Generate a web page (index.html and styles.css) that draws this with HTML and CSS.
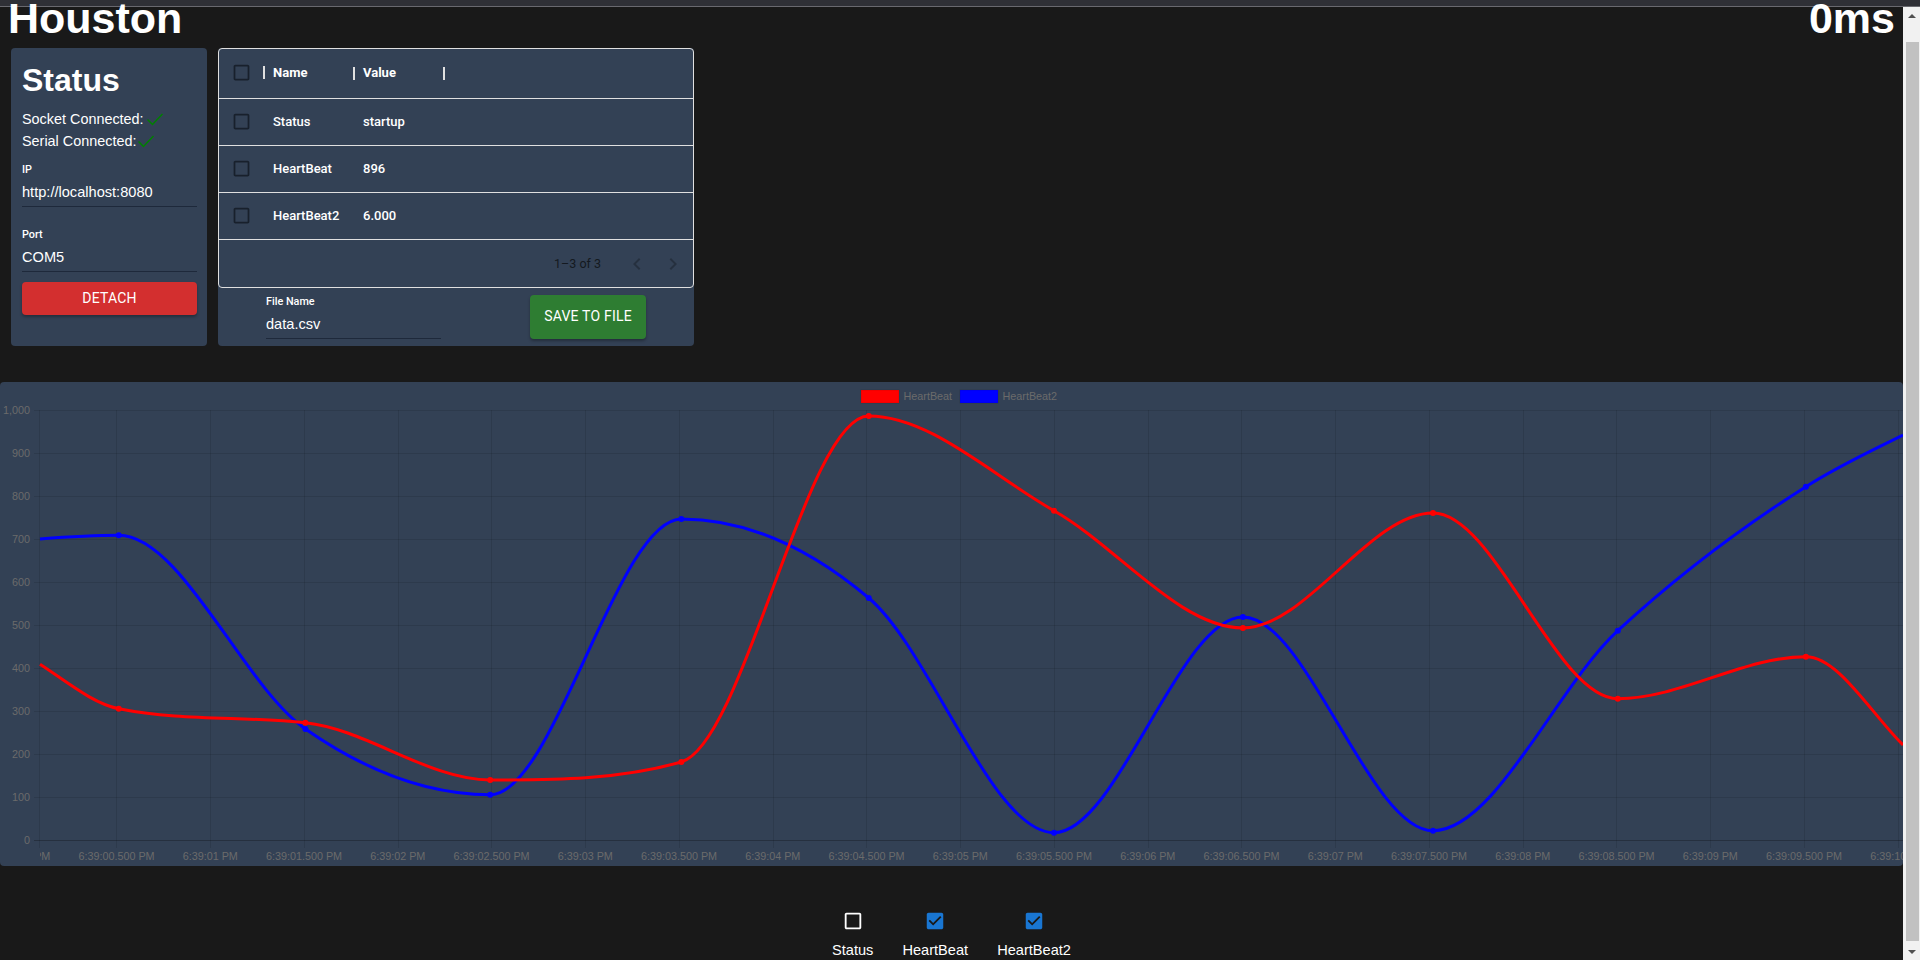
FILE: index.html
```html
<!DOCTYPE html>
<html>
<head>
	<meta charset="utf-8">
	<title>Houston</title>
	<link rel="stylesheet" href="styles.css">
</head>
<body>
	<div class="top-strip"></div>
	<div class="shell">
		<main class="page">
			<!--title row-->
			<header class="title-row">
				<h1>Houston</h1>
				<h1>0ms</h1>
			</header>

			<div class="panels">
				<!--status-->
				<section class="card status-card">
					<h2>Status</h2>
					<div class="status-lines">
						<div>Socket Connected:
							<svg class="tick" width="16" height="13" viewBox="0 0 16 13"><path d="M0.5 6.5 L5.5 11.5 L15.5 1"/></svg>
						</div>
						<div>Serial Connected:
							<svg class="tick" width="16" height="13" viewBox="0 0 16 13"><path d="M0.5 6.5 L5.5 11.5 L15.5 1"/></svg>
						</div>
					</div>
					<div class="field">
						<label>IP</label>
						<div class="field-value">http://localhost:8080</div>
					</div>
					<div class="field">
						<label>Port</label>
						<div class="field-value">COM5</div>
					</div>
					<button class="btn btn-red">DETACH</button>
				</section>

				<!--data table-->
				<section class="card table-card">
					<div class="grid">
						<div class="grid-row grid-head">
							<div class="cell-check"><svg class="box" viewBox="0 0 24 24"><path d="M19 5v14H5V5h14m0-2H5c-1.1 0-2 .9-2 2v14c0 1.1.9 2 2 2h14c1.1 0 2-.9 2-2V5c0-1.1-.9-2-2-2z"/></svg></div>
							<div class="cell">Name</div>
							<div class="cell">Value</div>
						</div>
						<div class="grid-row">
							<div class="cell-check"><svg class="box" viewBox="0 0 24 24"><path d="M19 5v14H5V5h14m0-2H5c-1.1 0-2 .9-2 2v14c0 1.1.9 2 2 2h14c1.1 0 2-.9 2-2V5c0-1.1-.9-2-2-2z"/></svg></div>
							<div class="cell">Status</div>
							<div class="cell">startup</div>
						</div>
						<div class="grid-row">
							<div class="cell-check"><svg class="box" viewBox="0 0 24 24"><path d="M19 5v14H5V5h14m0-2H5c-1.1 0-2 .9-2 2v14c0 1.1.9 2 2 2h14c1.1 0 2-.9 2-2V5c0-1.1-.9-2-2-2z"/></svg></div>
							<div class="cell">HeartBeat</div>
							<div class="cell">896</div>
						</div>
						<div class="grid-row">
							<div class="cell-check"><svg class="box" viewBox="0 0 24 24"><path d="M19 5v14H5V5h14m0-2H5c-1.1 0-2 .9-2 2v14c0 1.1.9 2 2 2h14c1.1 0 2-.9 2-2V5c0-1.1-.9-2-2-2z"/></svg></div>
							<div class="cell">HeartBeat2</div>
							<div class="cell">6.000</div>
						</div>
						<div class="grid-foot">
							<span class="page-count">1–3 of 3</span>
							<svg class="chevron" viewBox="0 0 24 24"><path d="M15.41 7.41 14 6l-6 6 6 6 1.41-1.41L10.83 12z"/></svg>
							<svg class="chevron" viewBox="0 0 24 24"><path d="M10 6 8.59 7.41 13.17 12l-4.58 4.58L10 18l6-6z"/></svg>
						</div>
					</div>
					<div class="save-row">
						<div class="field file-field">
							<label>File Name</label>
							<div class="field-value">data.csv</div>
						</div>
						<button class="btn btn-green">SAVE TO FILE</button>
					</div>
				</section>
			</div>

			<!--chart-->
			<section class="chart-card">
				<svg class="chart" width="1903" height="484" viewBox="0 382 1903 484">
					<defs>
						<clipPath id="xlabels"><rect x="40" y="845" width="1863" height="21"/></clipPath>
					</defs>

					<!--legend-->
					<rect class="legend-box" x="861" y="390" width="38" height="13" fill="#ff0000"/>
					<text class="label" x="903.5" y="400">HeartBeat</text>
					<rect class="legend-box" x="960" y="390" width="38" height="13" fill="#0000ff"/>
					<text class="label" x="1002.5" y="400">HeartBeat2</text>

					<!--grid-->
					<path class="grid-line" d="M34 410.5H1903 M34 453.5H1903 M34 496.5H1903 M34 539.5H1903 M34 582.5H1903 M34 625.5H1903 M34 668.5H1903 M34 711.5H1903 M34 754.5H1903 M34 797.5H1903"/>
					<path class="grid-line" d="M39.5 410V848 M116.5 410V848 M210.5 410V848 M304.5 410V848 M398.5 410V848 M491.5 410V848 M585.5 410V848 M679.5 410V848 M773.5 410V848 M866.5 410V848 M960.5 410V848 M1054.5 410V848 M1148.5 410V848 M1241.5 410V848 M1335.5 410V848 M1429.5 410V848 M1523.5 410V848 M1616.5 410V848 M1710.5 410V848 M1804.5 410V848 M1898.5 410V848"/>
					<path class="zero-line" d="M34 840.5H1903"/>

					<!--y axis-->
					<g class="y-labels">
						<text x="30" y="414">1,000</text>
						<text x="30" y="457">900</text>
						<text x="30" y="500">800</text>
						<text x="30" y="543">700</text>
						<text x="30" y="586">600</text>
						<text x="30" y="629">500</text>
						<text x="30" y="672">400</text>
						<text x="30" y="715">300</text>
						<text x="30" y="758">200</text>
						<text x="30" y="801">100</text>
						<text x="30" y="844">0</text>
					</g>

					<!--x axis-->
					<g class="x-labels" clip-path="url(#xlabels)">
						<text x="22.75" y="860">6:39:00 PM</text>
						<text x="116.5" y="860">6:39:00.500 PM</text>
						<text x="210.25" y="860">6:39:01 PM</text>
						<text x="304" y="860">6:39:01.500 PM</text>
						<text x="397.75" y="860">6:39:02 PM</text>
						<text x="491.5" y="860">6:39:02.500 PM</text>
						<text x="585.25" y="860">6:39:03 PM</text>
						<text x="679" y="860">6:39:03.500 PM</text>
						<text x="772.75" y="860">6:39:04 PM</text>
						<text x="866.5" y="860">6:39:04.500 PM</text>
						<text x="960.25" y="860">6:39:05 PM</text>
						<text x="1054" y="860">6:39:05.500 PM</text>
						<text x="1147.75" y="860">6:39:06 PM</text>
						<text x="1241.5" y="860">6:39:06.500 PM</text>
						<text x="1335.25" y="860">6:39:07 PM</text>
						<text x="1429" y="860">6:39:07.500 PM</text>
						<text x="1522.75" y="860">6:39:08 PM</text>
						<text x="1616.5" y="860">6:39:08.500 PM</text>
						<text x="1710.25" y="860">6:39:09 PM</text>
						<text x="1804" y="860">6:39:09.500 PM</text>
						<text x="1897.75" y="860">6:39:10 PM</text>
					</g>

					<!--HeartBeat2-->
					<path class="series series-blue" d="M40 539 C66 537 92 535.3 118.75 535.3 C180.97 535.3 243.2 685.6 305.4 729 C367 771.9 428.6 794.7 490.2 794.7 C553.9 794.7 617.6 519 681.3 519 C743.8 519 806.3 545.3 868.75 598 C930.5 650.1 992.25 832.7 1054 832.7 C1117 832.7 1179.9 617 1242.9 617 C1306.3 617 1369.6 830.7 1433 830.7 C1494.6 830.7 1556.2 687.6 1617.8 630.7 C1680.5 572.8 1743.2 526.4 1805.9 486.7 C1838 466 1871 451 1903 435"/>
					<g class="dots-blue">
						<circle cx="118.75" cy="535.3" r="3"/>
						<circle cx="305.4" cy="729" r="3"/>
						<circle cx="490.2" cy="794.7" r="3"/>
						<circle cx="681.3" cy="519" r="3"/>
						<circle cx="868.75" cy="598" r="3"/>
						<circle cx="1054" cy="832.7" r="3"/>
						<circle cx="1242.9" cy="617" r="3"/>
						<circle cx="1433" cy="830.7" r="3"/>
						<circle cx="1617.8" cy="630.7" r="3"/>
						<circle cx="1805.9" cy="486.7" r="3"/>
					</g>

					<!--HeartBeat-->
					<path class="series series-red" d="M40 664.3 C66 681 92.5 703.5 118.75 708.7 C180.95 721 243.2 716.2 305.4 722.7 C367 729.2 428.6 780 490.2 780 C553.9 780 617.6 780 681.3 762 C743.8 744.3 806.3 416 868.75 416 C930.5 416 992.25 475.7 1054 510.7 C1117 546.4 1179.9 628 1242.9 628 C1306.3 628 1369.6 513 1433 513 C1494.6 513 1556.2 698.7 1617.8 698.7 C1680.5 698.7 1743.2 656.7 1805.9 656.7 C1838 656.7 1870 712 1903 745"/>
					<g class="dots-red">
						<circle cx="118.75" cy="708.7" r="3"/>
						<circle cx="305.4" cy="722.7" r="3"/>
						<circle cx="490.2" cy="780" r="3"/>
						<circle cx="681.3" cy="762" r="3"/>
						<circle cx="868.75" cy="416" r="3"/>
						<circle cx="1054" cy="510.7" r="3"/>
						<circle cx="1242.9" cy="628" r="3"/>
						<circle cx="1433" cy="513" r="3"/>
						<circle cx="1617.8" cy="698.7" r="3"/>
						<circle cx="1805.9" cy="656.7" r="3"/>
					</g>
				</svg>
			</section>

			<!--series toggles-->
			<div class="toggles">
				<div class="toggle">
					<svg class="toggle-icon off" viewBox="0 0 24 24"><path d="M19 5v14H5V5h14m0-2H5c-1.1 0-2 .9-2 2v14c0 1.1.9 2 2 2h14c1.1 0 2-.9 2-2V5c0-1.1-.9-2-2-2z"/></svg>
					<span>Status</span>
				</div>
				<div class="toggle">
					<svg class="toggle-icon on" viewBox="0 0 24 24"><path d="M19 3H5c-1.11 0-2 .9-2 2v14c0 1.1.89 2 2 2h14c1.11 0 2-.9 2-2V5c0-1.1-.89-2-2-2zm-9 14l-5-5 1.41-1.41L10 14.17l7.59-7.59L19 8l-9 9z"/></svg>
					<span>HeartBeat</span>
				</div>
				<div class="toggle">
					<svg class="toggle-icon on" viewBox="0 0 24 24"><path d="M19 3H5c-1.11 0-2 .9-2 2v14c0 1.1.89 2 2 2h14c1.11 0 2-.9 2-2V5c0-1.1-.89-2-2-2zm-9 14l-5-5 1.41-1.41L10 14.17l7.59-7.59L19 8l-9 9z"/></svg>
					<span>HeartBeat2</span>
				</div>
			</div>
		</main>

		<!--scrollbar-->
		<div class="scrollbar">
			<div class="arrow-up"></div>
			<div class="thumb"></div>
			<div class="arrow-down"></div>
		</div>
	</div>
</body>
</html>
```

FILE: styles.css
```css
*{
    margin: 0;
    padding: 0;
    box-sizing: border-box;
}

html, body{
    width: 100%;
    height: 100%;
    overflow: hidden;
}

body{
    background-color: #191919;
    color: #fff;
    font-family: "Liberation Sans", Arial, sans-serif;
}

.top-strip{
    height: 7px;
    background-color: #2f3036;
    border-bottom: 1px solid #69696f;
}

.shell{
    display: flex;
    height: 953px;
}

.page{
    width: 1903px;
    flex-shrink: 0;
}

/* title */
.title-row{
    display: flex;
    justify-content: space-between;
    padding: 0 8px;
    margin-bottom: 18px;
}

.title-row h1{
    font-size: 43px;
    line-height: 23px;
    font-weight: 700;
}

/* top panels */
.panels{
    display: flex;
    gap: 11px;
    padding-left: 11px;
    margin-bottom: 36px;
}

.card{
    height: 298px;
    background-color: #334155;
    border-radius: 4px;
}

.status-card{
    width: 196px;
    padding: 14px 10px 0 11px;
}

.status-card h2{
    font-size: 32px;
    line-height: 36px;
    font-weight: 700;
    margin-bottom: 10px;
}

.status-lines{
    font-size: 14.4px;
    line-height: 22px;
    margin-bottom: 11px;
}

.tick{
    margin-left: -1px;
    vertical-align: -2px;
    fill: none;
    stroke: #008000;
    stroke-width: 1.5;
}

.status-lines div + div .tick{
    margin-left: -2px;
}

.field label{
    display: block;
    font-family: Roboto, sans-serif;
    font-size: 10.8px;
    font-weight: 500;
    line-height: 13px;
    margin-bottom: 5px;
}

.field-value{
    font-size: 14.6px;
    line-height: 22px;
    padding-bottom: 3px;
    border-bottom: 1px solid #1e293b;
}

.field + .field{
    margin-top: 21px;
}

.btn{
    display: block;
    border: 0;
    border-radius: 4px;
    padding-bottom: 2px;
    color: #fff;
    font-family: Roboto, sans-serif;
    font-size: 14px;
    letter-spacing: 0.2px;
    box-shadow: 0 2px 3px rgba(0, 0, 0, 0.3);
}

.btn-red{
    width: 175px;
    height: 33px;
    margin-top: 10px;
    background-color: #d32f2f;
}

.btn-green{
    width: 116px;
    height: 44px;
    margin-left: 89px;
    background-color: #2e7d32;
}

/* table */
.table-card{
    width: 476px;
}

.grid{
    border: 1px solid #e0e0e0;
    border-radius: 4px;
    height: 240px;
    font-family: Roboto, sans-serif;
    font-size: 13px;
    font-weight: 500;
}

.grid-row{
    display: flex;
    align-items: center;
    height: 47px;
    padding-bottom: 2px;
    border-bottom: 1px solid #e0e0e0;
}

.grid-head{
    height: 50px;
    font-weight: 700;
}

.cell-check{
    display: flex;
    align-items: center;
    width: 54px;
    padding-left: 12px;
}

.box{
    width: 21px;
    height: 21px;
    fill: #18202c;
}

.cell{
    width: 90px;
}

/* the little separators in the header */
.grid-head .cell-check, .grid-head .cell{
    position: relative;
}

.grid-head .cell-check::after, .grid-head .cell::after{
    content: "";
    position: absolute;
    top: 2px;
    right: 8px;
    width: 2px;
    height: 13px;
    background-color: #e0e0e0;
}

.grid-head .cell-check::after{
    top: 4px;
}

.grid-foot{
    display: flex;
    align-items: center;
    justify-content: flex-end;
    height: 47px;
    padding-right: 8px;
    color: #141920;
}

.page-count{
    font-weight: 400;
    font-size: 12.5px;
    margin-right: 24px;
}

.chevron{
    width: 24px;
    height: 24px;
    fill: rgba(0, 0, 0, 0.26);
}

.chevron + .chevron{
    margin-left: 12px;
}

.save-row{
    display: flex;
    align-items: flex-start;
    padding: 7px 0 0 48px;
}

.file-field{
    width: 175px;
}

/* chart */
.chart-card{
    height: 484px;
    background-color: #334155;
    border-radius: 4px;
    overflow: hidden;
}

.chart{
    display: block;
}

.chart text{
    font-family: "Liberation Sans", Arial, sans-serif;
    font-size: 10.8px;
    fill: #6b6b6b;
}

.y-labels text{
    text-anchor: end;
}

.x-labels text{
    text-anchor: middle;
}

.legend-box{
    stroke: rgba(0, 0, 0, 0.1);
}

.grid-line{
    fill: none;
    stroke: rgba(0, 0, 0, 0.1);
}

.zero-line{
    fill: none;
    stroke: rgba(0, 0, 0, 0.25);
}

.series{
    fill: none;
    stroke-width: 3;
}

.series-red{
    stroke: #f00;
}

.series-blue{
    stroke: #00f;
}

.dots-red{
    fill: #f00;
}

.dots-blue{
    fill: #00f;
}

/* toggles under the chart */
.toggles{
    display: flex;
    justify-content: center;
    gap: 29px;
    padding-top: 44px;
    font-size: 14.6px;
}

.toggle{
    display: flex;
    flex-direction: column;
    align-items: center;
    gap: 10px;
    line-height: 17px;
}

.toggle-icon{
    width: 22px;
    height: 22px;
}

.toggle-icon.off{
    fill: #fff;
}

.toggle-icon.on{
    fill: #1976d2;
}

/* scrollbar */
.scrollbar{
    display: flex;
    flex-direction: column;
    align-items: center;
    width: 17px;
    background-color: #f1f1f1;
    padding: 0 0 0 1px;
}

.thumb{
    width: 13px;
    height: 899px;
    margin-top: 24px;
    background-color: #c1c1c1;
}

.arrow-up, .arrow-down{
    width: 0;
    height: 0;
    border-left: 4px solid transparent;
    border-right: 4px solid transparent;
}

.arrow-up{
    margin-top: 7px;
    border-bottom: 4px solid #505050;
}

.arrow-down{
    margin-top: 9px;
    border-top: 4px solid #505050;
}
```
